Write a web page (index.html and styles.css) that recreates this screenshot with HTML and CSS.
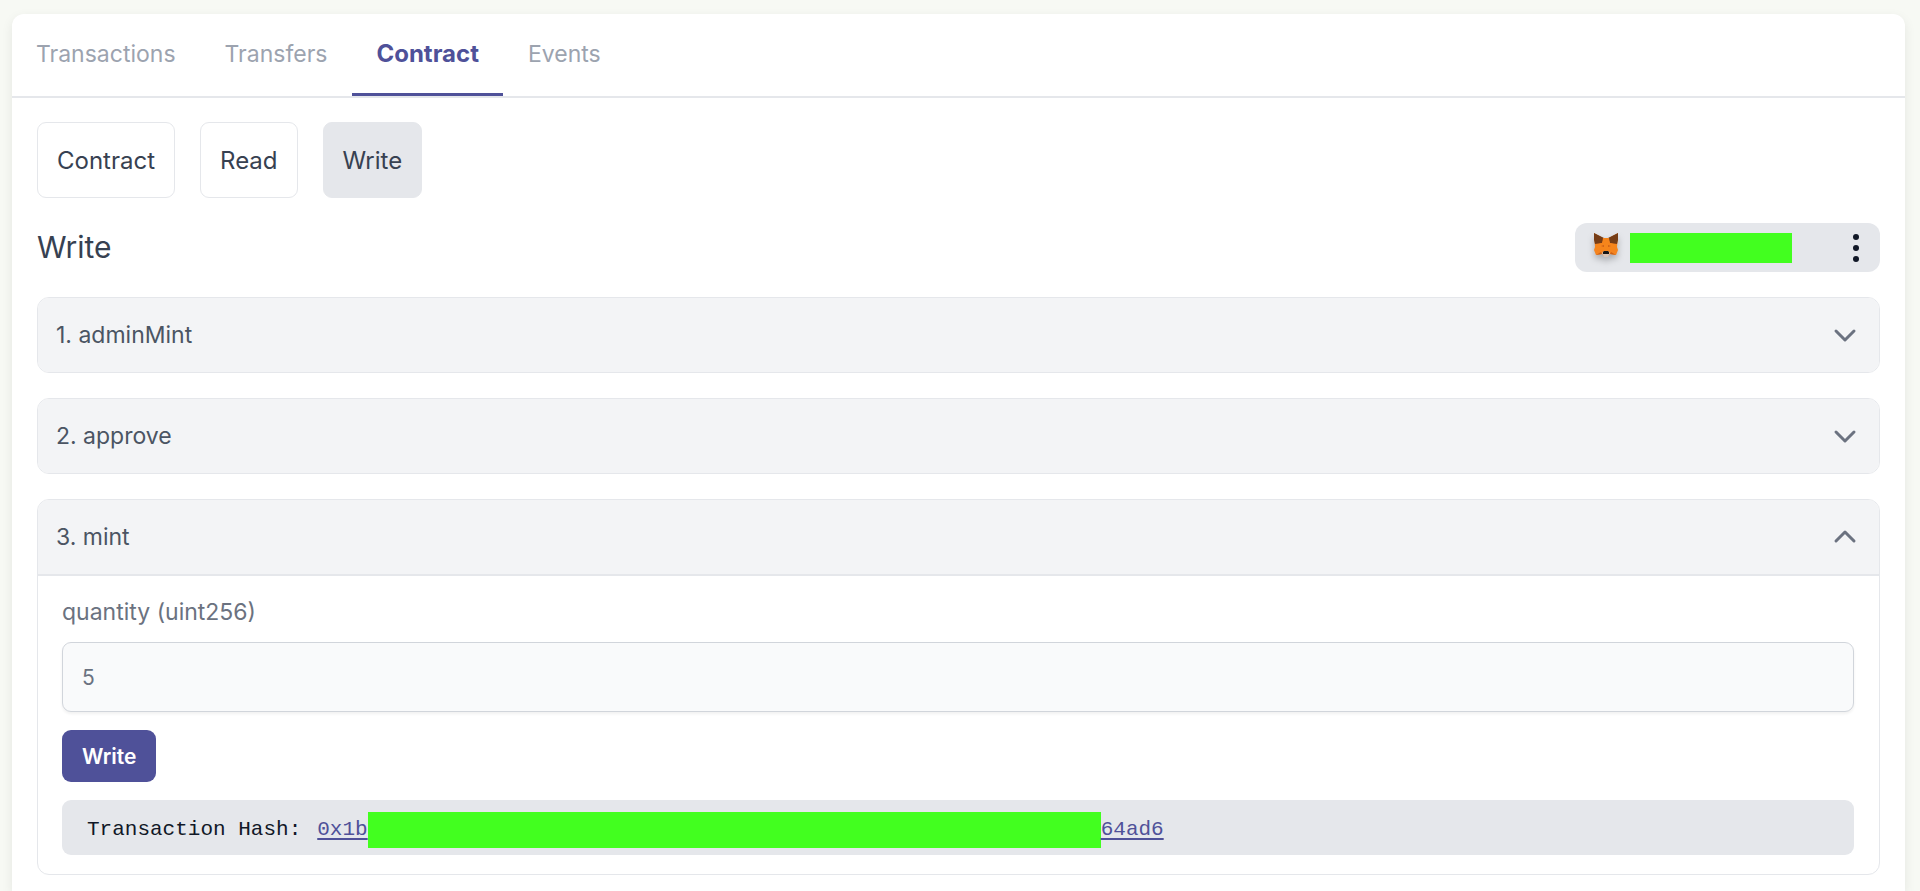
FILE: index.html
```html
<!DOCTYPE html>
<html lang="en">
<head>
<meta charset="utf-8">
<meta name="viewport" content="width=device-width, initial-scale=1">
<title>Contract</title>
<link rel="stylesheet" href="styles.css">
</head>
<body>
<main class="card">
  <nav class="tabs">
    <a class="tab" href="#transactions">Transactions</a>
    <a class="tab" href="#transfers">Transfers</a>
    <a class="tab tab-active" href="#contract" aria-current="page">Contract</a>
    <a class="tab" href="#events">Events</a>
  </nav>
  <div class="content">
    <div class="modes">
      <button class="mode" type="button">Contract</button>
      <button class="mode" type="button">Read</button>
      <button class="mode mode-active" type="button">Write</button>
    </div>
    <div class="heading">
      <h1 class="title">Write</h1>
      <div class="wallet">
        <svg class="fox" viewBox="0 0 26 26" aria-hidden="true">
          <path fill="#f5841f" d="M1 1 10 6h6l9-5-1 14 1 3-2 5-6-1-2 2h-4l-2-2-6 1-2-5 1-3z"/>
          <path fill="#763d16" d="M1 1 11 6 9 11 2 12 1 8zM25 1 15 6l2 5 7 1 1-4z"/>
          <path fill="#f6851b" d="M10 6h6l1 6-1 7h-6l-1-7zM2 13l7-2 1 6-8 1zM24 13l-7-2-1 6 8 1z"/>
          <path fill="#cd6116" d="m8 14 3-1v2zM18 14l-3-1v2zM3 23l5-3 1 2zM23 23l-5-3-1 2z"/>
          <path fill="#d7c1b3" d="m9 21 2-2h4l2 2-2 4h-4z"/>
          <path fill="#161616" d="m10 20 1-1h4l1 1v2h-6z"/>
        </svg>
        <span class="mask mask-address"></span>
        <button class="menu" type="button" aria-label="Wallet options">
          <svg class="dots" viewBox="0 0 12 30" aria-hidden="true"><circle cx="6" cy="4" r="3"/><circle cx="6" cy="15" r="3"/><circle cx="6" cy="26" r="3"/></svg>
        </button>
      </div>
    </div>
    <div class="methods">
      <section class="method">
        <button class="method-head" type="button" aria-expanded="false">1. adminMint
          <svg class="chevron" viewBox="0 0 24 24" aria-hidden="true"><path d="m3 8 9 9 9-9"/></svg>
        </button>
      </section>
      <section class="method">
        <button class="method-head" type="button" aria-expanded="false">2. approve
          <svg class="chevron" viewBox="0 0 24 24" aria-hidden="true"><path d="m3 8 9 9 9-9"/></svg>
        </button>
      </section>
      <section class="method">
        <button class="method-head" type="button" aria-expanded="true">3. mint
          <svg class="chevron" viewBox="0 0 24 24" aria-hidden="true"><path d="m3 16 9-9 9 9"/></svg>
        </button>
        <form class="method-body">
          <label class="label" for="quantity">quantity (uint256)</label>
          <input class="input" id="quantity" type="text" value="5">
          <button class="submit" type="button">Write</button>
          <div class="result">
            <span>Transaction Hash:</span>
            <a class="hash" href="#hash"><span>0x1b</span><span class="mask mask-hash"></span><span>64ad6</span></a>
          </div>
        </form>
      </section>
    </div>
  </div>
</main>
</body>
</html>
```
FILE: styles.css
```css
* { box-sizing: border-box; }
body {
  margin: 0;
  padding: 14px 15px 0 12px;
  background: #f7f9f4;
  color: #374151;
  font: 400 23px/36px Inter, "Liberation Sans", sans-serif;
}
button, input { font: inherit; color: inherit; margin: 0; }
button { cursor: pointer; }
.card {
  min-height: calc(100vh - 14px);
  background: #fff;
  border-radius: 12px 12px 0 0;
  box-shadow: 0 4px 12px rgba(0, 0, 0, 0.08);
}
.tabs { display: flex; gap: 1px; border-bottom: 2px solid #e5e7eb; }
.tab {
  padding: 22px 24px 21px;
  border-bottom: 3px solid transparent;
  color: #9ca3af;
  text-decoration: none;
}
.tab-active { color: #4f5199; border-bottom-color: #4f5199; font-size: 24px; font-weight: 700; }
.content { padding: 24px 25px 16px; }
.modes { display: flex; gap: 25px; }
.mode {
  padding: 20px 19px 18px;
  background: #fff;
  border: 1px solid #e5e7eb;
  border-radius: 9px;
  font-size: 24px;
}
.mode-active { background: #e5e7eb; }
.heading {
  display: flex;
  justify-content: space-between;
  align-items: center;
  margin: 25px 0;
}
.title { margin: 0; font-size: 30px; font-weight: 400; line-height: 49px; }
.wallet {
  display: flex;
  align-items: center;
  width: 305px;
  height: 49px;
  padding: 0 18px;
  background: #e5e7eb;
  border-radius: 12px;
}
.fox { width: 26px; height: 26px; margin: 0 11px 6px 0; filter: drop-shadow(0 4px 3px rgba(0, 0, 0, 0.25)); }
.mask { background: #42ff1f; }
.mask-address { width: 162px; height: 30px; }
.menu { display: flex; margin-left: auto; padding: 0; border: 0; background: none; }
.dots { width: 12px; height: 30px; fill: #111827; }
.methods { display: grid; gap: 25px; }
.method { border: 1px solid #e5e7eb; border-radius: 12px; overflow: hidden; }
.method-head {
  display: flex;
  justify-content: space-between;
  align-items: center;
  width: 100%;
  padding: 19px 22px 19px 18px;
  border: 0;
  background: #f3f4f6;
  color: #4b5563;
  text-align: left;
}
.chevron {
  width: 24px;
  height: 24px;
  fill: none;
  stroke: #6b7280;
  stroke-width: 3;
  stroke-linecap: round;
  stroke-linejoin: round;
}
.method-body {
  display: flex;
  flex-direction: column;
  align-items: flex-start;
  padding: 18px 25px 19px 24px;
  border-top: 2px solid #e5e7eb;
}
.label { color: #6b7280; margin-bottom: 12px; }
.input {
  width: 100%;
  height: 70px;
  padding: 0 19px;
  border: 1px solid #d1d5db;
  border-radius: 9px;
  background: #f9fafb;
  box-shadow: 0 2px 3px rgba(0, 0, 0, 0.06);
  color: #6b7280;
  font-size: 21px;
}
.submit {
  margin: 18px 0;
  padding: 9px 20px 7px;
  border: 0;
  border-radius: 9px;
  background: #4f5199;
  color: #fff;
  font-size: 21px;
  font-weight: 600;
}
.result {
  display: flex;
  align-items: center;
  gap: 16px;
  width: 100%;
  height: 55px;
  padding: 4px 25px 0;
  border-radius: 9px;
  background: #e5e7eb;
  color: #111827;
  font-family: "Liberation Mono", monospace;
  font-size: 21px;
}
.hash { display: flex; align-items: center; color: #4f5199; text-underline-offset: 3px; }
.mask-hash { width: 733px; height: 36px; }
```
